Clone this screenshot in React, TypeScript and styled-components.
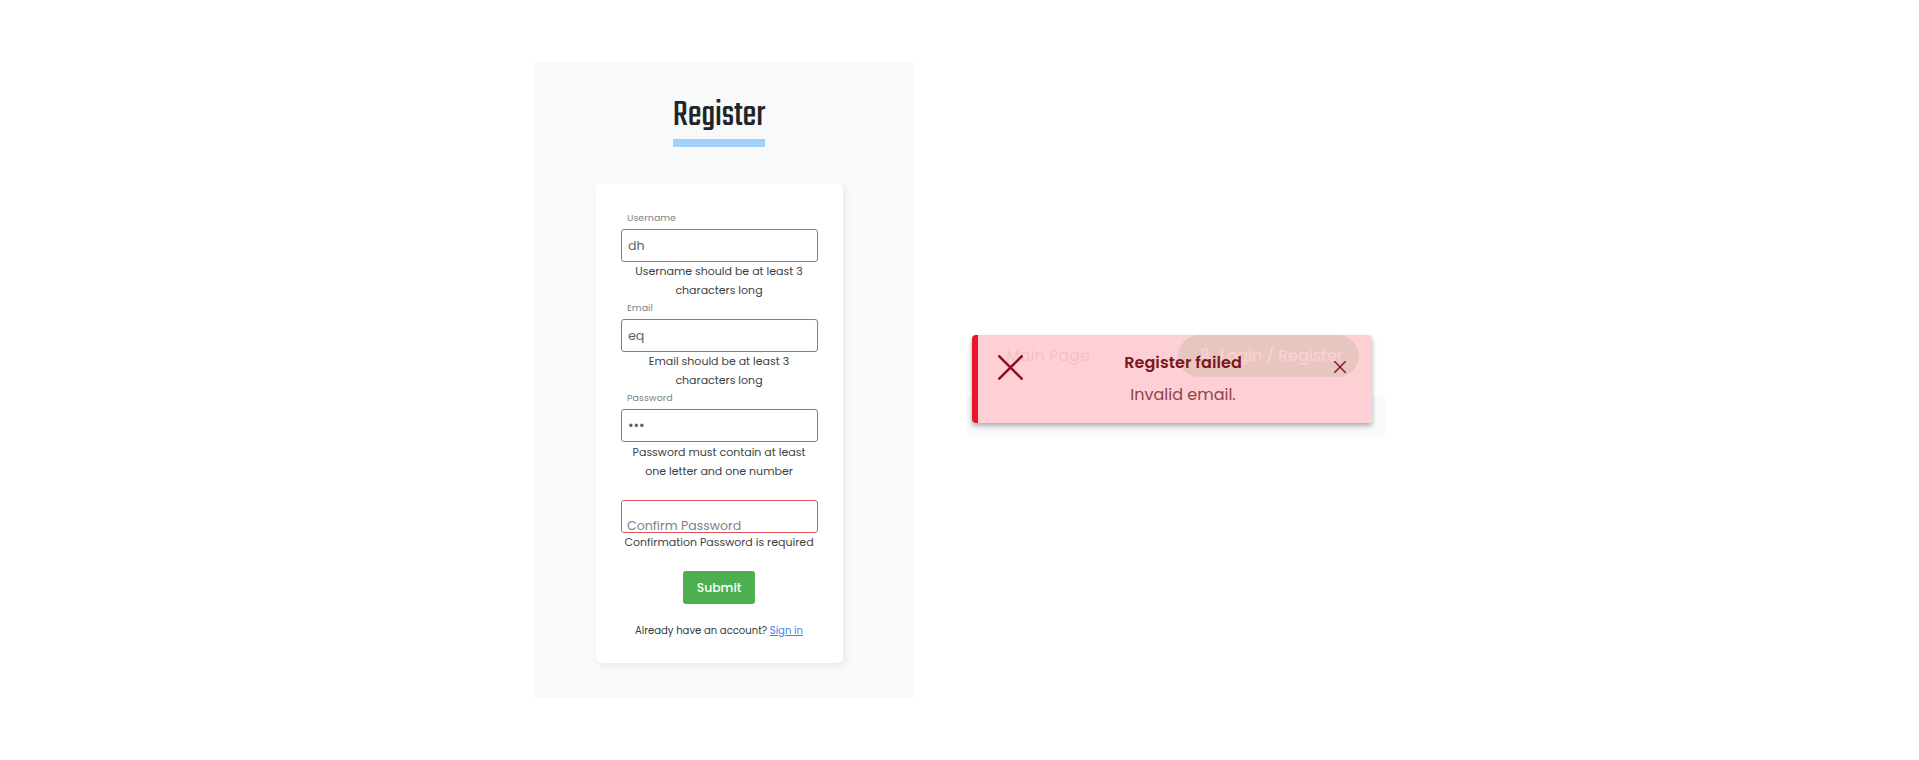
import React from "react";
import styled, { createGlobalStyle } from "styled-components";

const GlobalStyle = createGlobalStyle`
  * { box-sizing: border-box; }
  body { margin: 0; background: #fff; font-family: Poppins, Inter, "Open Sans", sans-serif; color: #212529; }
`;

const Page = styled.main`
  display: flex;
  align-items: flex-start;
  width: 1919px;
  height: 760px;
  padding: 62px 0 0 535px;
  gap: 54px;
  overflow: hidden;
`;

const RegisterPanel = styled.section`
  display: flex;
  flex-direction: column;
  align-items: center;
  width: 378px;
  height: 636px;
  padding-right: 10px;
  background: #f7f9fb;
`;

const Heading = styled.h1`
  display: flex;
  justify-content: center;
  width: 92px;
  height: 84.5px;
  margin: 0 0 37px;
  padding-top: 30.5px;
  border-bottom: 8px solid #a0d1fa;
  font: 400 38px/46px Teko, Roboto, sans-serif;
`;

const HeadingText = styled.span`
  display: block;
  flex: none;
`;

const Card = styled.form`
  display: flex;
  flex-direction: column;
  align-items: center;
  width: 247px;
  height: 479.5px;
  padding: 24.5px 25px 0;
  border-radius: 5px;
  background: #fff;
  box-shadow: 3px 3px 6px rgba(60, 70, 90, 0.08);
`;

const Field = styled.div`
  display: flex;
  flex-direction: column;
  width: 197px;
  height: 90.2px;
`;

const Label = styled.label<{ $resting?: boolean }>`
  position: relative;
  top: ${(p) => (p.$resting ? "37px" : "0")};
  flex: none;
  height: 21px;
  padding-left: 6.5px;
  color: #7b838b;
  font-size: ${(p) => (p.$resting ? "12.55px" : "9.5px")};
  line-height: ${(p) => (p.$resting ? "20px" : "19px")};
  white-space: nowrap;
`;

const Input = styled.input`
  flex: none;
  width: 197px;
  height: 33px;
  padding: 0 6.5px;
  border: 1px solid #df5661;
  border-radius: 3px;
  outline: none;
  background: transparent;
  color: #5d646b;
  font: 400 12.6px Poppins, Inter, sans-serif;

  &[type="password"] {
    padding-top: 1px;
    font-size: 13.5px;
  }
`;

const ErrorText = styled.p`
  flex: none;
  margin: 0.3px -5px 0;
  color: #3b3f44;
  font-size: 11px;
  line-height: 18.9px;
  text-align: center;
  white-space: pre-line;
`;

const Submit = styled.button`
  width: 72px;
  height: 33px;
  flex: none;
  margin-top: 2px;
  padding: 1px 0 0;
  border: 0;
  border-radius: 3px;
  background: #4caf50;
  color: #fff;
  font: 500 12.4px Poppins, Inter, sans-serif;
`;

const SignInLine = styled.p`
  margin: 18px -5px 0;
  color: #33373b;
  font-size: 10.05px;
  line-height: 18px;
  white-space: nowrap;
`;

const SignInLink = styled.a`
  color: #3f82f0;
  text-decoration: underline;
`;

const SitePreview = styled.section`
  position: relative;
  display: flex;
  flex-direction: column;
  width: 418px;
  height: 102px;
  margin-top: 273px;
`;

const NavBar = styled.nav`
  display: flex;
  align-items: flex-start;
  justify-content: space-between;
  height: 62px;
  padding: 0 26px 0 39px;
  font-size: 16px;
`;

const NavLink = styled.span`
  padding-top: 9px;
  color: #858585;
  line-height: 24px;
`;

const LoginPill = styled.span`
  display: flex;
  align-items: center;
  gap: 9px;
  width: 181px;
  height: 42px;
  padding: 0 0 2px 21px;
  border-radius: 21px;
  background: #4caf50;
  color: #fff;
  font-weight: 400;
  white-space: nowrap;
`;

const PageBand = styled.div`
  height: 40px;
  background: #f8f9fb;
`;

const Toast = styled.div`
  position: absolute;
  top: 0;
  left: 5px;
  display: flex;
  width: 400px;
  height: 88px;
  padding: 0 26.5px 0 20px;
  border-left: 6px solid #ea162c;
  border-radius: 4px;
  background: rgba(254, 202, 207, 0.88);
  box-shadow: 0 3px 5px rgba(0, 0, 0, 0.3);
`;

const ToastMark = styled.svg`
  width: 25px;
  height: 25px;
  margin-top: 19.5px;
`;

const ToastBody = styled.div`
  flex: 1;
  padding-left: 9.5px;
  text-align: center;
`;

const ToastTitle = styled.div`
  padding-top: 16px;
  color: #7c1720;
  font-size: 16px;
  font-weight: 600;
  line-height: 24px;
  letter-spacing: 0.08px;
`;

const ToastMessage = styled.div`
  padding-top: 8px;
  color: #92414c;
  font-size: 16px;
  line-height: 24px;
`;

const CloseButton = styled.button`
  display: flex;
  width: 12px;
  height: 12px;
  margin: 26px 0 0;
  padding: 0;
  border: 0;
  background: none;
`;

const fields = [
  { id: "username", label: "Username", type: "text", value: "dh", error: "Username should be at least 3\ncharacters long" },
  { id: "email", label: "Email", type: "text", value: "eq", error: "Email should be at least 3\ncharacters long" },
  { id: "password", label: "Password", type: "password", value: "abc", error: "Password must contain at least\none letter and one number" },
  { id: "confirm", label: "Confirm Password", type: "password", value: "", error: "Confirmation Password is required" },
];

export default function App() {
  return (
    <>
      <GlobalStyle />
      <Page>
        <RegisterPanel>
          <Heading><HeadingText>Register</HeadingText></Heading>
          <Card>
            {fields.map((f) => (
              <Field key={f.id}>
                <Label htmlFor={f.id} $resting={!f.value}>{f.label}</Label>
                <Input id={f.id} type={f.type} defaultValue={f.value} />
                <ErrorText>{f.error}</ErrorText>
              </Field>
            ))}
            <Submit type="button">Submit</Submit>
            <SignInLine>Already have an account? <SignInLink href="#">Sign in</SignInLink></SignInLine>
          </Card>
        </RegisterPanel>
        <SitePreview>
          <NavBar>
            <NavLink>Main Page</NavLink>
            <LoginPill>
              <svg width="12" height="14" viewBox="0 0 12 14" fill="none" stroke="currentColor" strokeWidth="1.5">
                <circle cx="6" cy="4" r="2.8" />
                <path d="M1 13v-1a3 3 0 0 1 3-3h4a3 3 0 0 1 3 3v1" />
              </svg>
              Login / Register
            </LoginPill>
          </NavBar>
          <PageBand />
          <Toast role="alert">
            <ToastMark viewBox="0 0 25 25" fill="none" stroke="#85141f" strokeWidth="2.6" strokeLinecap="round">
              <path d="M1.3 1.3l22.4 22.4M23.7 1.3L1.3 23.7" />
            </ToastMark>
            <ToastBody>
              <ToastTitle>Register failed</ToastTitle>
              <ToastMessage>Invalid email.</ToastMessage>
            </ToastBody>
            <CloseButton aria-label="Close">
              <svg width="12" height="12" viewBox="0 0 12 12" fill="none" stroke="#7c1720" strokeWidth="1.4" strokeLinecap="round">
                <path d="M.6.6l10.8 10.8M11.4.6L.6 11.4" />
              </svg>
            </CloseButton>
          </Toast>
        </SitePreview>
      </Page>
    </>
  );
}
